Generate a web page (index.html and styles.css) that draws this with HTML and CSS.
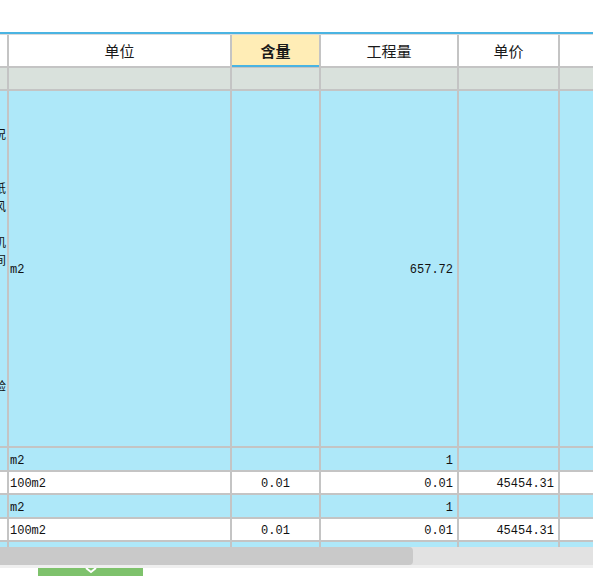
FILE: index.html
```html
<!DOCTYPE html>
<html lang="zh">
<head>
<meta charset="utf-8">
<title>工程量</title>
<link rel="stylesheet" href="styles.css">
</head>
<body>
<div class="top"></div>
<div class="grid-wrap">
  <div class="grid">
    <div class="c hdr"></div>
    <div class="c hdr">单位</div>
    <div class="c hdr active">含量</div>
    <div class="c hdr">工程量</div>
    <div class="c hdr">单价</div>
    <div class="c hdr"></div>

    <div class="c sub"></div>
    <div class="c sub"></div>
    <div class="c sub"></div>
    <div class="c sub"></div>
    <div class="c sub"></div>
    <div class="c sub"></div>

    <div class="c blue clip">
      <div class="ln">&nbsp;</div>
      <div class="ln">况</div>
      <div class="ln">&nbsp;</div>
      <div class="ln">&nbsp;</div>
      <div class="ln">纸</div>
      <div class="ln">风</div>
      <div class="ln">&nbsp;</div>
      <div class="ln">机</div>
      <div class="ln">间</div>
      <div class="ln">&nbsp;</div>
      <div class="ln">&nbsp;</div>
      <div class="ln">&nbsp;</div>
      <div class="ln">&nbsp;</div>
      <div class="ln">&nbsp;</div>
      <div class="ln">&nbsp;</div>
      <div class="ln">验</div>
    </div>
    <div class="c blue left">m2</div>
    <div class="c blue"></div>
    <div class="c blue right">657.72</div>
    <div class="c blue"></div>
    <div class="c blue"></div>

    <div class="c blue"></div>
    <div class="c blue left">m2</div>
    <div class="c blue"></div>
    <div class="c blue right">1</div>
    <div class="c blue"></div>
    <div class="c blue"></div>

    <div class="c white"></div>
    <div class="c white left">100m2</div>
    <div class="c white center">0.01</div>
    <div class="c white right">0.01</div>
    <div class="c white right">45454.31</div>
    <div class="c white"></div>

    <div class="c blue"></div>
    <div class="c blue left">m2</div>
    <div class="c blue"></div>
    <div class="c blue right">1</div>
    <div class="c blue"></div>
    <div class="c blue"></div>

    <div class="c white"></div>
    <div class="c white left">100m2</div>
    <div class="c white center">0.01</div>
    <div class="c white right">0.01</div>
    <div class="c white right">45454.31</div>
    <div class="c white"></div>

    <div class="c blue"></div>
    <div class="c blue"></div>
    <div class="c blue"></div>
    <div class="c blue"></div>
    <div class="c blue"></div>
    <div class="c blue"></div>
  </div>
</div>
<div class="hscroll"><div class="thumb"></div></div>
<div class="strip"></div>
<div class="footer">
  <div class="tab">
    <svg class="chev" width="12" height="6" viewBox="0 0 12 6"><polyline points="1,0 6,4 11,0" fill="none" stroke="#ffffff" stroke-width="2"/></svg>
  </div>
</div>
</body>
</html>
```

FILE: styles.css
```css
html, body {
  margin: 0;
  padding: 0;
  background: #ffffff;
  overflow: hidden;
  width: 593px;
  height: 576px;
}

.top {
  height: 32px;
  background: #ffffff;
}

.grid-wrap {
  height: 513px;
  border-top: 2px solid #4ab4e2;
  overflow: hidden;
  width: 593px;
}

.grid {
  display: grid;
  grid-template-columns: 7px 221px 87px 136px 99px 120px;
  grid-template-rows: 31px 21px 355px 22px 21px 22px 21px 30px;
  gap: 2px;
  background: #c4c4c4;
  border-top: 1px solid #dadada;
  width: max-content;
}

.c {
  display: flex;
  align-items: center;
  font-family: "Liberation Mono", "DejaVu Sans Mono", monospace;
  font-size: 12px;
  color: #111111;
  overflow: hidden;
  white-space: nowrap;
}

.hdr {
  background: #ffffff;
  justify-content: center;
  font-family: "Noto Sans CJK SC", "Noto Sans", sans-serif;
  font-size: 15px;
  color: #1a1a1a;
}

.hdr.active {
  background: #ffedb6;
  font-weight: bold;
  box-shadow: inset 0 -1px 0 #4ab4e2, 0 1px 0 #4ab4e2;
}

.sub {
  background: #d9e1dc;
}

.blue {
  background: #aee8f9;
}

.white {
  background: #ffffff;
}

.left {
  justify-content: flex-start;
  padding-left: 1px;
  padding-top: 3px;
}

.right {
  justify-content: flex-end;
  padding-right: 4px;
  padding-top: 3px;
}

.center {
  justify-content: center;
  padding-top: 3px;
}

.clip {
  display: block;
  padding-top: 16px;
}

.ln {
  height: 18px;
  line-height: 18px;
  margin-left: -6px;
  font-family: "Noto Sans CJK SC", sans-serif;
  font-size: 12px;
  color: #111111;
}

.hscroll {
  height: 18px;
  background: #e2e2e2;
}

.thumb {
  width: 413px;
  height: 18px;
  background: #c9c9c9;
  border-radius: 0 4px 4px 0;
}

.strip {
  height: 3px;
  background: #efefef;
}

.footer {
  height: 8px;
  padding-left: 38px;
  background: #ffffff;
}

.tab {
  width: 105px;
  height: 8px;
  background: #7ec26c;
  display: flex;
  justify-content: center;
  align-items: flex-start;
}

.chev {
  display: block;
}
```
